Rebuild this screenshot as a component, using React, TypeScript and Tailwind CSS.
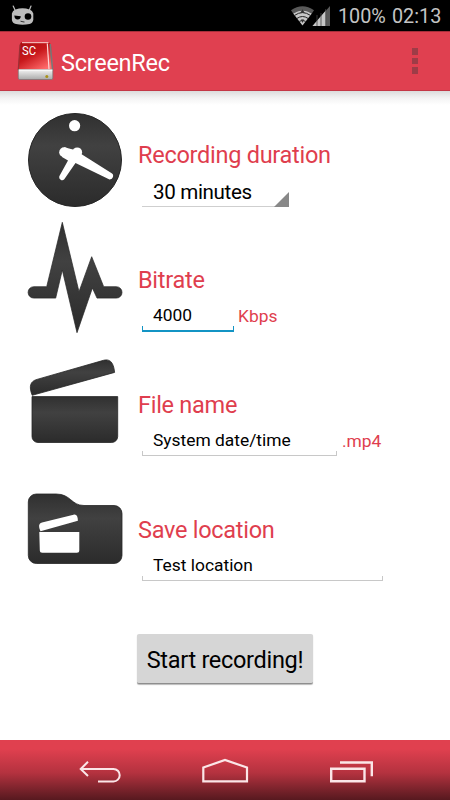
import type { ReactNode } from "react";
import clsx from "clsx";

type FieldProps = {
  value: string;
  width: string;
  focused?: boolean;
};

// Holo-style text field: the underline has a short tick on either end.
function Field({ value, width, focused }: FieldProps) {
  return (
    <div className={clsx("flex h-[38px] flex-col text-[17.4px] text-black", width)}>
      <span className="h-8 pt-[10px] pl-[11px] leading-[22px] whitespace-nowrap">{value}</span>
      <span
        className={clsx(
          "w-full",
          focused
            ? "h-[6px] border-x-[1.5px] border-b-2 border-[#1394c4]"
            : "h-[5px] border-x border-b border-[#c8c8c8]",
        )}
      />
    </div>
  );
}

function Spinner({ value }: { value: string }) {
  return (
    <div className="flex h-[38px] w-[147px] items-end justify-between border-b border-[#cfcfcf] text-black">
      <span className="h-[27px] pl-[11px] text-[20.6px] leading-[26px] tracking-[-0.35px] whitespace-nowrap">
        {value}
      </span>
      <svg viewBox="0 0 15 15" className="-mb-px h-[15px] w-[15px] shrink-0">
        <path d="M15 0V15H0Z" fill="#888" />
      </svg>
    </div>
  );
}

function Setting({ icon, label, children }: { icon: ReactNode; label: string; children: ReactNode }) {
  return (
    <section className="flex h-[125px] pl-6">
      <svg viewBox="0 0 104 125" className="h-[125px] w-[104px] shrink-0">
        {icon}
      </svg>
      <div className="pt-[45px] pl-[10px] text-[#df3e4e]">
        <h2 className="h-7 text-[23.5px] leading-7 tracking-[-0.27px] whitespace-nowrap">{label}</h2>
        <div className="flex pl-1">{children}</div>
      </div>
    </section>
  );
}

const clock = (
  <>
    <circle cx="51" cy="64" r="46.5" fill="url(#ink)" stroke="#262626" strokeWidth="1" />
    <g fill="#fff">
      <circle cx="50.6" cy="29.7" r="5.6" />
      <circle cx="40.2" cy="56.3" r="5" />
      <circle cx="53.2" cy="56.3" r="4.9" />
      <path d="M40 51.3 49 53.5 58 58.5 87.3 77A3.4 3.4 0 0 1 85.5 83.4L51.5 67 40.3 83.2A3 3 0 0 1 35.3 80.2L44 64.5 38 61Z" />
    </g>
  </>
);

const pulse = (
  <path
    d="M38.3 1.3 55 70.7 67.7 35.7 79.7 65.7H92.3A5.7 5.7 0 0 1 92.3 77.1H73L68.4 67 53 111.7 38.3 49 31.7 77.1H9.8A5.7 5.7 0 0 1 9.8 65.7H22.7Z"
    fill="url(#ink)"
    stroke="#262626"
    strokeWidth="0.7"
  />
);

const clapper = (
  <g fill="url(#ink)" stroke="#262626" strokeWidth="0.8">
    <path d="M8.2 49.3C4.5 40 6.5 35.2 13 33.4L79.5 14.3C85 12.8 89.5 15 90.6 26.4Z" />
    <path d="M8 50.6H93.7V90.5A6 6 0 0 1 87.7 96.5H14A6 6 0 0 1 8 90.5Z" />
  </g>
);

const folder = (
  <>
    <path
      d="M12.3 23H32C47 23 47 34.5 60 34.5H90A8 8 0 0 1 98 42.5V84.5A8 8 0 0 1 90 92.5H12.3A8 8 0 0 1 4.3 84.5V31A8 8 0 0 1 12.3 23Z"
      fill="url(#ink)"
      stroke="#262626"
      strokeWidth="0.8"
    />
    <g fill="#fff">
      <path d="M16.5 60.2C14.3 55 14.6 52.5 18 51.4L49.5 43.7C52.5 43 53.7 45 53.9 49.8Z" />
      <path d="M15.3 61H55.3V79.2A2.5 2.5 0 0 1 52.8 81.7H18.3A2.5 2.5 0 0 1 15.8 79.2Z" />
    </g>
  </>
);

function StatusBar() {
  return (
    <div className="flex h-[31px] items-center bg-black text-[#c4c4c4]">
      <svg viewBox="0 0 24 22" className="ml-[11px] h-[22px] w-6">
        <path d="M2.2 1 4.5 6M20 1 18 6" stroke="#bdbdbd" strokeWidth="1.2" strokeLinecap="round" />
        <path
          d="M4.5 4.5Q11.5 2 18.5 4.5 21.5 5.5 22.3 8.5V15Q21.5 18.5 18.5 19 11.5 20.3 5 19 1.5 18.3.9 15V8.5Q1.5 5.5 4.5 4.5Z"
          fill="#bdbdbd"
        />
        <path d="M3.3 10.5 9.8 11.3Q9.5 14.5 6.7 14.5 3.5 14.5 3.3 10.5Z" fill="#000" />
        <circle cx="17" cy="11.5" r="3.3" fill="#000" />
        <path d="M9.5 16.2 12 16.8 13.5 17" stroke="#333" strokeWidth="1" />
      </svg>
      <svg viewBox="0 0 42 22" className="ml-auto h-[22px] w-[42px]">
        <path d="M1 5.3Q12.5-3 24 5.3L21.8 8.6Q12.5 2.3 3.2 8.6Z" fill="#595959" />
        <path d="M3.2 8.6Q12.5 2.3 21.8 8.6L12.5 20.5Z" fill="#c6c6c6" />
        <path d="M4.6 10.4Q12.5 4.8 20.4 10.4M7 13.4Q12.5 9.6 18 13.4M9.4 16.4Q12.5 14.2 15.6 16.4" fill="none" stroke="#222" strokeWidth="1" />
        <path d="M12.5 4.2 14.8 8H10.2ZM12.5 18 10.8 14.5H14.2Z" fill="#333" />
        <path d="M40 1V21H22.5Z" fill="#595959" />
        <path d="M36 5.3V21H22.5Z" fill="#c6c6c6" />
        <path d="M27 10V21M31 8V21M35.7 4V21" stroke="#444" strokeWidth="0.8" />
      </svg>
      <span className="ml-[6px] w-[47px] pt-[2px] text-[19.8px] leading-[29px] whitespace-nowrap">100%</span>
      <span className="mr-[8px] ml-[7px] w-[50px] pt-[2px] text-[19.8px] leading-[29px] whitespace-nowrap">02:13</span>
    </div>
  );
}

function ActionBar() {
  return (
    <header className="flex h-[60px] items-center border-t border-b border-t-[#a62f3b] border-b-[#c43746] bg-[#e04050] text-white">
      <svg viewBox="0 0 37 40" className="ml-[17px] h-10 w-[37px]">
        <path d="M4.5 1.3H31Q33.5 1.3 34 4L36 29H1L3 4Q3.2 1.3 4.5 1.3Z" fill="url(#drive)" />
        <path d="M5 1.6H31.5" stroke="#f2b4b4" strokeWidth="1.2" />
        <path d="M30.3 2.5 32 28" stroke="#ffd5d5" strokeWidth="1.2" />
        <path d="M33.2 3 35.6 29" stroke="#777" strokeWidth="1.6" />
        <path d="M3 3.5 1.3 29" stroke="#9b3036" strokeWidth="1.2" />
        <path d="M1.3 28.5H35.8V37Q35.8 38.5 34.3 38.5H2.8Q1.3 38.5 1.3 37Z" fill="url(#base)" stroke="#777" strokeWidth="0.7" />
        <path d="M2 29H35.3" stroke="#fff" />
        <circle cx="29.8" cy="35.6" r="1.5" fill="#a8921a" />
        <text x="5" y="14.4" fontSize="13" textLength="14" lengthAdjust="spacingAndGlyphs" fill="#fff">
          SC
        </text>
      </svg>
      <h1 className="ml-[7px] pt-[3px] text-[23.5px] leading-[30px] tracking-[-0.27px]">ScreenRec</h1>
      <div className="mr-[32px] ml-auto flex flex-col gap-[3px]">
        <span className="size-[6.4px] bg-[#9e3c47]" />
        <span className="size-[6.4px] bg-[#9e3c47]" />
        <span className="size-[6.4px] bg-[#9e3c47]" />
      </div>
    </header>
  );
}

function NavBar() {
  return (
    <nav className="flex h-[60px] items-center justify-between bg-linear-to-b from-[#e0404f] from-15% via-[#b4323f] via-55% to-[#57191f] pr-[76px] pl-[77px]">
      <svg viewBox="0 0 44 30" className="h-[30px] w-11" fill="none" stroke="#fbe6e8" strokeWidth="2">
        <path d="M11 6.7 3.7 14 11 21M3.7 14H36.5A6.2 6.2 0 0 1 36.5 26.4H21" />
      </svg>
      <svg viewBox="0 0 48 30" className="h-[30px] w-12" fill="none" stroke="#fbe6e8" strokeWidth="2.2">
        <path d="M2.3 26.4V12.5L24 5 46 12.5V26.4Z" />
      </svg>
      <svg viewBox="0 0 45 30" className="h-[30px] w-[45px]" fill="none" stroke="#fbe6e8" strokeWidth="2.4">
        <path d="M2.2 13.7H35.5V26.2H2.2ZM11 7.5H42.8V21.2" />
      </svg>
    </nav>
  );
}

// Gradients shared by the icons, referenced by id.
function Gradients() {
  return (
    <svg className="absolute h-0 w-0" aria-hidden="true">
      <defs>
        <linearGradient id="ink" x1="0" y1="0" x2="0" y2="1">
          <stop offset="0" stopColor="#303030" />
          <stop offset="0.35" stopColor="#414141" />
          <stop offset="1" stopColor="#2b2b2b" />
        </linearGradient>
        <linearGradient id="drive" x1="0" y1="0" x2="0.7" y2="1">
          <stop offset="0" stopColor="#a80c10" />
          <stop offset="0.5" stopColor="#c8181c" />
          <stop offset="1" stopColor="#ff6a6a" />
        </linearGradient>
        <linearGradient id="base" x1="0" y1="0" x2="0" y2="1">
          <stop offset="0" stopColor="#f4f4f4" />
          <stop offset="1" stopColor="#aaa" />
        </linearGradient>
      </defs>
    </svg>
  );
}

export default function App() {
  return (
    <div className="flex h-[800px] w-[450px] flex-col overflow-hidden bg-white font-[Roboto,sans-serif]">
      <Gradients />
      <StatusBar />
      <ActionBar />
      <main className="flex flex-1 flex-col bg-linear-to-b from-[#dcdcdc] via-[#f3f3f3] via-[7px] to-white to-[14px] pt-[5px]">
        <Setting icon={clock} label="Recording duration">
          <Spinner value="30 minutes" />
        </Setting>
        <Setting icon={pulse} label="Bitrate">
          <Field value="4000" width="w-[92px]" focused />
          <span className="pt-[11px] pl-1 text-[17.4px] leading-[22px]">Kbps</span>
        </Setting>
        <Setting icon={clapper} label="File name">
          <Field value="System date/time" width="w-[195px]" />
          <span className="pt-[11px] pl-[5px] text-[17.4px] leading-[22px]">.mp4</span>
        </Setting>
        <Setting icon={folder} label="Save location">
          <Field value="Test location" width="w-[241px]" />
        </Setting>
        <button
          type="button"
          className="mt-[38px] ml-[137px] h-[50px] w-[176px] rounded-[2px] border-b border-[#8e8e8e] bg-[#d6d6d6] pt-[2px] text-[23.5px] leading-7 tracking-[-0.3px] whitespace-nowrap text-black shadow-[0_1px_1px_#bbb]"
        >
          Start recording!
        </button>
      </main>
      <NavBar />
    </div>
  );
}
